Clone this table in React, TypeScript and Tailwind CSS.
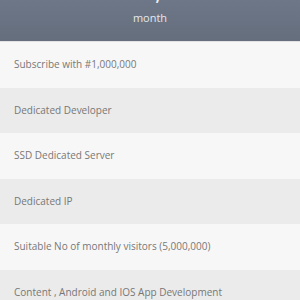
import React from "react";

const items = [
  "Subscribe with #1,000,000",
  "Dedicated Developer",
  "SSD Dedicated Server",
  "Dedicated IP",
  "Suitable No of monthly visitors (5,000,000)",
  "Content , Android and IOS App Development",
];

export default function App() {
  return (
    <div
      className="w-[300px] h-[300px] overflow-hidden bg-[#f7f7f7]"
      style={{ fontFamily: '"Open Sans", sans-serif' }}
    >
      <div className="h-[41px] bg-gradient-to-b from-[#6d7787] to-[#646e7d] flex flex-col items-center overflow-hidden">
        <div className="text-[26px] leading-[26px] text-[#eef0f3] -mt-[23px]">#500,000</div>
        <div className="text-[11px] leading-[15px] text-[#e6e8ec] mt-[7px]">month</div>
      </div>
      <div className="h-px bg-[#e2e2e2]" />
      {items.map((t, i) => (
        <div
          key={i}
          className={`h-[45.5px] flex items-center px-[14px] text-[10px] text-[#777777] ${
            i % 2 === 0 ? "bg-[#f7f7f7]" : "bg-[#ebebeb]"
          }`}
        >
          {t}
        </div>
      ))}
    </div>
  );
}
